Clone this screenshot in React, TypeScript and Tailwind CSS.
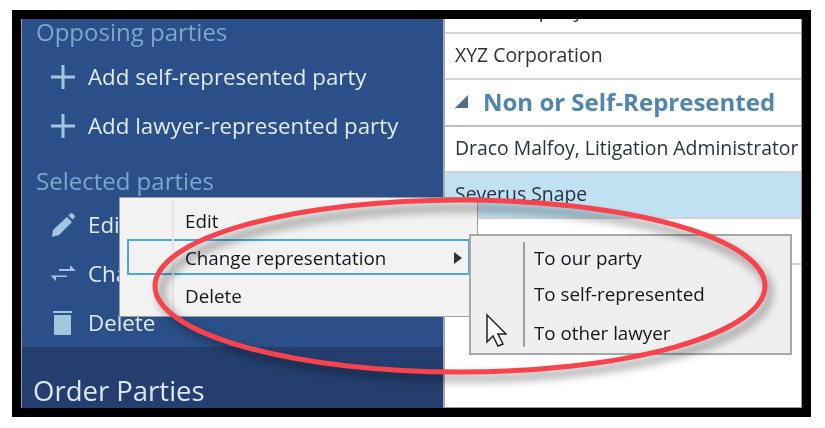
import React from 'react'

const sansFont = "font-['Open_Sans','Noto_Sans',sans-serif]"

const PlusIcon = () => (
    <svg width="26" height="26" viewBox="0 0 26 26" aria-hidden="true">
        <path d="M1 13h24M13 1v24" stroke="#a3c6dc" strokeWidth="3" />
    </svg>
)

const PencilIcon = () => (
    <svg width="26" height="26" viewBox="0 0 26 26" aria-hidden="true">
        <path d="M2 25l1-7L17 5l5 5L9 23zM18.500 3.500l2-2a1.500 1.500 0 0 1 2 0l2 2a1.500 1.500 0 0 1 0 2l-2 2z" fill="#a3c6dc" />
    </svg>
)

const SwapIcon = () => (
    <svg width="26" height="26" viewBox="0 0 26 26" aria-hidden="true">
        <path d="M9 8h11v-4l6 6h-17zM17 16H6v4l-5.500-5.500h16.500z" fill="#a3c6dc" />
    </svg>
)

const TrashIcon = () => (
    <svg width="26" height="26" viewBox="0 0 26 26" aria-hidden="true">
        <path d="M3 1h19v2H3zM4 5h17v19a1 1 0 0 1-1 1H5a1 1 0 0 1-1-1z" fill="#a3c6dc" />
    </svg>
)

const SidebarAction = ({ icon, label }: { icon: React.ReactNode; label: string }) => (
    <div className="flex h-[49px] items-center gap-[12px] pl-[28px] text-[22.300px] text-[#dfeaf4]">
        {icon}
        <span>{label}</span>
    </div>
)

const ListRow = ({ label, selected, tight }: { label: string; selected?: boolean; tight?: boolean }) => (
    <div className={`flex h-[46px] shrink-0 items-center overflow-hidden border-b-2 border-[#d3d3dc] pl-[10px] text-[19.400px] text-[#2a3240] whitespace-nowrap ${tight ? 'pt-[1px]' : 'pb-[2px]'} ${selected ? 'bg-[#c0e1f2]' : ''}`}>
        {label}
    </div>
)

export default function App() {
    return (
        <div className={`h-[428px] w-[825px] overflow-hidden bg-white pl-[12px] pt-[10px] blur-[0.4px] ${sansFont}`}>
            <div className="relative flex h-[407px] w-[799px] overflow-hidden border-[9px] border-black bg-white">
                {/* 左のサイドバー */}
                <aside className="flex w-[422px] shrink-0 flex-col border-l border-[#9a9a9a] bg-[#2b5089]">
                    <div className="flex h-[27px] items-center pb-[2px] pl-[14px] text-[24px] text-[#7ba8c8]">Opposing parties</div>
                    <div className="h-[6px]" />
                    <SidebarAction icon={<PlusIcon />} label="Add self-represented party" />
                    <SidebarAction icon={<PlusIcon />} label="Add lawyer-represented party" />
                    <div className="flex h-[50px] items-center pl-[14px] pt-[11px] text-[24px] text-[#7ba8c8]">Selected parties</div>
                    <SidebarAction icon={<PencilIcon />} label="Edit" />
                    <SidebarAction icon={<SwapIcon />} label="Change" />
                    <SidebarAction icon={<TrashIcon />} label="Delete" />
                    <div className="mt-auto flex h-[61px] items-end bg-[#243f6f] pl-[11px] text-[27.500px] leading-[34px] text-[#dce6f0]">Order Parties</div>
                </aside>

                {/* 右の一覧 */}
                <main className="flex min-w-0 flex-1 flex-col border-r border-b border-[#9a9a9a] border-l-2 border-l-[#a9a9a9]">
                    <div className="flex h-[15px] shrink-0 items-end overflow-hidden border-b-2 border-[#d3d3dc] pl-[10px] text-[19.400px] leading-[24px] text-[#2a3240]">
                        <span className="-mt-[15px] -translate-y-[10px]">ABC Company</span>
                    </div>
                    <ListRow label="XYZ Corporation" />
                    <div className="flex h-[47px] shrink-0 items-center gap-[15px] border-b-2 border-[#bdbdc6] pb-[2px] pl-[10px]">
                        <svg width="13" height="13" viewBox="0 0 13 13" aria-hidden="true">
                            <path d="M13 0v13H0z" fill="#4a6f8f" />
                        </svg>
                        <span className="text-[24px] font-bold text-[#4f86ae]">Non or Self-Represented</span>
                    </div>
                    <ListRow label="Draco Malfoy, Litigation Administrator" />
                    <ListRow label="Severus Snape" selected />
                    <ListRow label="Ed Tanner, Sarah Williams" tight />
                </main>

                {/* コンテキストメニュー */}
                <div className="absolute left-[98px] top-[178px] flex h-[120px] w-[359px] flex-col border border-[#a0a0a0] bg-[#f2f2f2] p-[2px] text-[18.800px] text-[#15161c]">
                    <div className="absolute bottom-[2px] left-[52px] top-[2px] w-[2px] bg-[#e6e6e6]" />
                    <div className="flex h-[39px] items-center pl-[63px] pt-[3px]">Edit</div>
                    <div className="mx-[5px] flex h-[37px] items-center justify-between border-2 border-[#4aa8de] pl-[56px] pr-[6px] pt-[2px]">
                        <span>Change representation</span>
                        <svg width="8" height="12" viewBox="0 0 8 12" aria-hidden="true">
                            <path d="M0 0l8 6-8 6z" fill="#333" />
                        </svg>
                    </div>
                    <div className="flex h-[39px] items-center pl-[63px] pt-[2px]">Delete</div>
                </div>

                {/* サブメニュー */}
                <div className="absolute left-[448px] top-[215px] flex h-[121px] w-[323px] flex-col border-2 border-[#a8a8a8] bg-[#efefef] py-[5px] pl-[63px] text-[18.800px] text-[#15161c]">
                    <div className="absolute bottom-[6px] left-[52px] top-[6px] w-[2px] bg-[#a0a0a0]" />
                    <div className="flex h-[37px] items-center pb-[2px]">To our party</div>
                    <div className="flex h-[37px] items-center">To self-represented</div>
                    <div className="flex h-[37px] items-center pt-[5px]">To other lawyer</div>
                    <svg className="absolute left-[14px] top-[77px]" width="22" height="34" viewBox="0 0 22 34" aria-hidden="true">
                        <path d="M2 2v27l6-6 5 10 5-2-5-10h8z" fill="#fff" stroke="#222" strokeWidth="1.500" />
                    </svg>
                </div>

                {/* 赤い楕円の注釈 */}
                <svg className="pointer-events-none absolute left-0 top-0" width="781" height="389" viewBox="0 0 781 389" aria-hidden="true">
                    <ellipse cx="444" cy="274" rx="304" ry="85" fill="none" stroke="#000" strokeOpacity="0.35" strokeWidth="7" style={{ filter: 'blur(4px)' }} />
                    <ellipse cx="439" cy="267" rx="305" ry="86" fill="none" stroke="#f8434c" strokeWidth="5" />
                </svg>
            </div>
        </div>
    )
}
